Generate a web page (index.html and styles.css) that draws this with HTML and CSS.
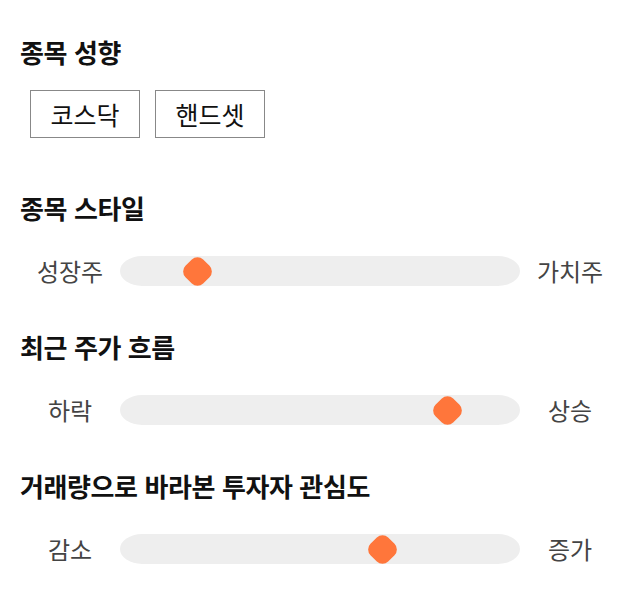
FILE: index.html
```html
<!DOCTYPE html>
<html lang="ko">
<head>
    <meta charset="UTF-8">
    <meta name="viewport" content="width=device-width, initial-scale=1.0">
    <title>종목 성향</title>
    <link rel="stylesheet" href="styles.css">
</head>
<body>
    <div class="container">
        <div class="section">
            <h2 class="title">종목 성향</h2>
            <div class="tags">
                <button class="tag">코스닥</button>
                <button class="tag">핸드셋</button>
            </div>
        </div>

        <div class="section">
            <h2 class="title">종목 스타일</h2>
            <div class="slider-row">
                <span class="side">성장주</span>
                <div class="track">
                    <span class="thumb" style="left: 19.25%;"></span>
                </div>
                <span class="side">가치주</span>
            </div>
        </div>

        <div class="section">
            <h2 class="title">최근 주가 흐름</h2>
            <div class="slider-row">
                <span class="side">하락</span>
                <div class="track">
                    <span class="thumb" style="left: 81.75%;"></span>
                </div>
                <span class="side">상승</span>
            </div>
        </div>

        <div class="section">
            <h2 class="title">거래량으로 바라본 투자자 관심도</h2>
            <div class="slider-row">
                <span class="side">감소</span>
                <div class="track">
                    <span class="thumb" style="left: 65.5%;"></span>
                </div>
                <span class="side">증가</span>
            </div>
        </div>
    </div>
</body>
</html>
```

FILE: styles.css
```css
body {
    margin: 0;
    background: #fff;
    font-family: "Noto Sans CJK KR", "Noto Sans", sans-serif;
    color: #111;
}
.container {
    padding: 34px 20px 0 20px;
    width: 600px;
}
.title {
    margin: 0;
    font-size: 26px;
    font-weight: 700;
    line-height: 36px;
    letter-spacing: -0.4px;
}
.section {
    margin-bottom: 43px;
}
.section:first-child {
    margin-bottom: 52px;
}
.tags {
    display: flex;
    gap: 15px;
    padding: 20px 0 0 10px;
}
.tag {
    width: 110px;
    height: 48px;
    background: #fff;
    border: 1px solid #888;
    border-radius: 0;
    font-family: inherit;
    font-size: 25px;
    color: #111;
    padding: 0;
}
.slider-row {
    display: flex;
    align-items: center;
    height: 30px;
    margin-top: 30px;
}
.side {
    width: 100px;
    text-align: center;
    font-size: 24px;
    line-height: 30px;
    color: #444;
}
.track {
    position: relative;
    width: 400px;
    height: 30px;
    background: #eeeeee;
    border-radius: 22px / 15px;
}
.thumb {
    position: absolute;
    top: 2.5px;
    width: 25px;
    height: 25px;
    margin-left: -12.5px;
    background: #ff763b;
    border-radius: 8px;
    transform: rotate(45deg);
}
```
